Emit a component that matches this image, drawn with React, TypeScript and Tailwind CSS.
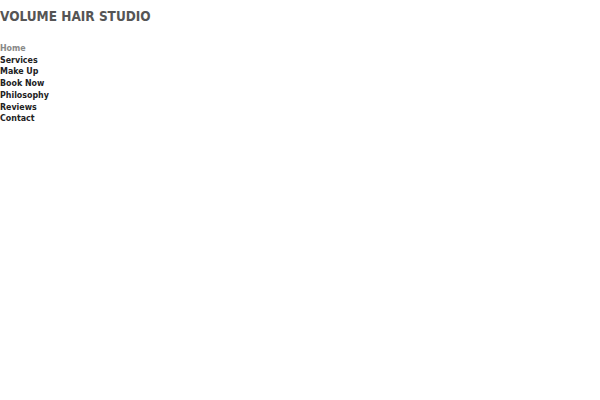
export default function App() {
  const items = ['Services', 'Make Up', 'Book Now', 'Philosophy', 'Reviews', 'Contact']
  return (
    <div className="min-h-[400px] w-[600px] bg-white" style={{ fontFamily: '"DejaVu Sans Condensed", "DejaVu Sans", sans-serif' }}>
      <h1 className="pt-[8px] text-[13.5px] font-bold leading-[16px] text-[#555]">VOLUME HAIR STUDIO</h1>
      <nav className="mt-[19px] flex flex-col text-[8.8px] font-bold leading-[11.7px]">
        <a className="text-[#888]">Home</a>
        {items.map((item) => (
          <a key={item} className="text-[#222]">
            {item}
          </a>
        ))}
      </nav>
    </div>
  )
}
